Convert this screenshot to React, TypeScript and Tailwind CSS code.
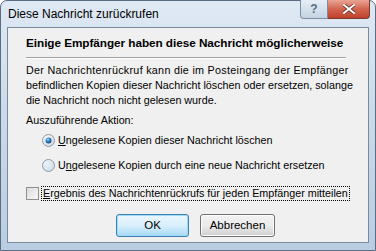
import React from "react";

const font = { fontFamily: "'Liberation Sans', Arial, sans-serif" };

function Radio({ checked }: { checked: boolean }) {
  return (
    <svg width="13" height="13" viewBox="0 0 13 13" className="shrink-0">
      <defs>
        <radialGradient id={checked ? "rg1" : "rg2"} cx="0.4" cy="0.35" r="0.7">
          <stop offset="0" stopColor="#ffffff" />
          <stop offset="1" stopColor="#cfd8e2" />
        </radialGradient>
        <radialGradient id="dot" cx="0.4" cy="0.35" r="0.7">
          <stop offset="0" stopColor="#9fd6f5" />
          <stop offset="0.5" stopColor="#2b7fbf" />
          <stop offset="1" stopColor="#0f3d6e" />
        </radialGradient>
      </defs>
      <circle cx="6.5" cy="6.5" r="6" fill={`url(#${checked ? "rg1" : "rg2"})`} stroke="#8e9aa6" strokeWidth="1" />
      {checked ? <circle cx="6.5" cy="6.5" r="3" fill="url(#dot)" /> : <circle cx="6.5" cy="6.5" r="4.5" fill="#d6e6f2" opacity="0.6" />}
    </svg>
  );
}

export default function App() {
  return (
    <div className="w-[376px] h-[251px] relative overflow-hidden" style={font}>
      <div className="w-full h-full rounded-t-[7px] border border-[#5a6d82] bg-gradient-to-b from-[#dfe9f4] via-[#c9d9ea] to-[#b9cde2] flex flex-col">
        <div className="h-[26px] flex items-center pl-[7px] text-[12px] text-black">
          Diese Nachricht zurückrufen
        </div>
        <div className="mx-[6px] h-[216px] bg-[#f0f0f0] border border-[#7a8a9c] flex flex-col pl-[18px] pr-[12px] text-[10.75px] text-black">
          <div className="pt-[7px] font-bold text-[11.75px] tracking-[-0.05px] leading-[15px] whitespace-nowrap">
            Einige Empfänger haben diese Nachricht möglicherweise
          </div>
          <div className="mt-[7px] mr-[10px] h-[2px] border-t border-[#a0a0a0] border-b border-b-white" />
          <div className="mt-[4px] leading-[15px] whitespace-nowrap">
            <div className="tracking-[0.29px]">Der Nachrichtenrückruf kann die im Posteingang der Empfänger</div>
            <div>befindlichen Kopien dieser Nachricht löschen oder ersetzen, solange</div>
            <div>die Nachricht noch nicht gelesen wurde.</div>
          </div>
          <div className="mt-[5px] leading-[15px]">Auszuführende Aktion:</div>
          <div className="mt-[5px] pl-[16px] flex items-center gap-[3px] h-[15px] whitespace-nowrap">
            <Radio checked />
            <span><span className="underline">U</span>ngelesene Kopien dieser Nachricht löschen</span>
          </div>
          <div className="mt-[10px] pl-[16px] flex items-center gap-[3px] h-[15px] whitespace-nowrap">
            <Radio checked={false} />
            <span>U<span className="underline">n</span>gelesene Kopien durch eine neue Nachricht ersetzen</span>
          </div>
          <div className="mt-[13px] flex items-center gap-[2px] h-[15px] whitespace-nowrap">
            <span className="w-[13px] h-[13px] border border-[#8e8f8f] bg-gradient-to-br from-[#dcdcdc] to-[#f8f8f8] shrink-0" />
            <span className="border border-dotted border-black px-px leading-[13px]">
              <span className="underline">E</span>rgebnis des Nachrichtenrückrufs für jeden Empfänger mitteilen
            </span>
          </div>
          <div className="mt-[13px] ml-[90px] flex gap-[11px]">
            <button className="w-[73px] h-[23px] rounded-[3px] border border-[#3c7fb1] bg-gradient-to-b from-[#eaf6fd] via-[#d9f0fc] to-[#a7d9f5] text-[11.5px] shadow-[inset_0_0_0_1px_#9fdcf8]">
              OK
            </button>
            <button className="w-[75px] h-[23px] rounded-[3px] border border-[#707070] bg-gradient-to-b from-[#f2f2f2] via-[#ebebeb] to-[#cfcfcf] text-[11.5px] shadow-[inset_0_0_0_1px_#fcfcfc]">
              Abbrechen
            </button>
          </div>
        </div>
      </div>
      <div className="absolute top-0 right-[6px] flex">
        <div className="w-[28px] h-[19px] border border-[#7b8ea3] border-t-0 rounded-bl-[4px] bg-gradient-to-b from-[#e6eef6] to-[#c4d3e3] flex items-center justify-center text-[12px] font-bold text-[#5c6d80]">?</div>
        <div className="w-[42px] h-[19px] border border-[#7a3a2f] border-t-0 border-l-0 rounded-br-[4px] bg-gradient-to-b from-[#e8a493] via-[#d2644f] to-[#c0402a] flex items-center justify-center">
          <svg width="12" height="10" viewBox="0 0 12 10">
            <path d="M1 1 L11 9 M11 1 L1 9" stroke="#5a2a22" strokeWidth="3.4" strokeLinecap="square" />
            <path d="M1 1 L11 9 M11 1 L1 9" stroke="#ffffff" strokeWidth="2" strokeLinecap="square" />
          </svg>
        </div>
      </div>
    </div>
  );
}
